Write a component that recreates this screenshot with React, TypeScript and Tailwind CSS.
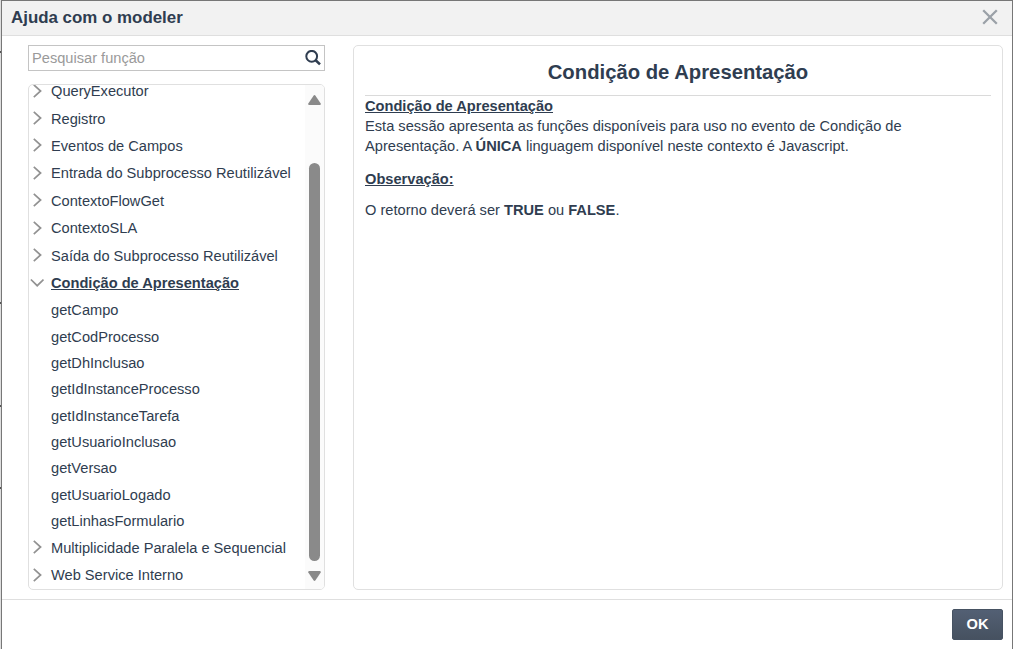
type Category = { name: string; children?: string[] };

const categories: Category[] = [
  { name: 'QueryExecutor' },
  { name: 'Registro' },
  { name: 'Eventos de Campos' },
  { name: 'Entrada do Subprocesso Reutilizável' },
  { name: 'ContextoFlowGet' },
  { name: 'ContextoSLA' },
  { name: 'Saída do Subprocesso Reutilizável' },
  {
    name: 'Condição de Apresentação',
    children: [
      'getCampo',
      'getCodProcesso',
      'getDhInclusao',
      'getIdInstanceProcesso',
      'getIdInstanceTarefa',
      'getUsuarioInclusao',
      'getVersao',
      'getUsuarioLogado',
      'getLinhasFormulario',
    ],
  },
  { name: 'Multiplicidade Paralela e Sequencial' },
  { name: 'Web Service Interno' },
];

function Chevron({ open }: { open: boolean }) {
  return (
    <svg width="14" height="14" viewBox="0 0 14 14" fill="none" stroke="#929292" strokeWidth="1.7" className="-mt-[3px] shrink-0">
      <path d={open ? 'M.9 4.5 7.2 10.7 13.5 4.5' : 'M3.8 .8 10.6 7 3.8 13.2'} />
    </svg>
  );
}

function CategoryRow({ category }: { category: Category }) {
  const open = !!category.children;
  return (
    <li>
      <div className="flex h-[27.4px] items-center gap-[7px] pl-px">
        <Chevron open={open} />
        <span className={open ? 'font-bold underline' : ''}>{category.name}</span>
      </div>
      {category.children && (
        <ul className="pt-[0.7px] pl-[22px]">
          {category.children.map((fn) => (
            <li key={fn} className="flex h-[26.3px] items-center">
              {fn}
            </li>
          ))}
        </ul>
      )}
    </li>
  );
}

function Scrollbar() {
  return (
    <div className="flex w-[19px] shrink-0 flex-col items-center bg-[#fbfbfb] pt-[10px] pr-px pb-[8px]">
      <svg width="13" height="10" viewBox="0 0 13 10" fill="#8a8a8a" className="shrink-0">
        <path d="M6.5 0Q7 0 7.5.7L12.7 8.5Q13 10 12 10H1Q0 10 .3 8.5L5.5.7Q6 0 6.5 0Z" />
      </svg>
      <div className="mt-[58px] h-[398px] w-[11px] shrink-0 rounded-full bg-[#8a8a8a]" />
      <svg width="13" height="10" viewBox="0 0 13 10" fill="#8a8a8a" className="mt-[10px] shrink-0">
        <path d="M6.5 10Q6 10 5.5 9.3L.3 1.5Q0 0 1 0H12Q13 0 12.7 1.5L7.5 9.3Q7 10 6.5 10Z" />
      </svg>
    </div>
  );
}

export default function App() {
  return (
    <div className="flex h-[649px] w-[1013px] bg-white font-['Liberation_Sans',Arial,sans-serif] text-[14.63px] text-[#2f3d50]">
      <div className="flex w-[2px] shrink-0 flex-col border-r border-[#777] bg-[#dedede]">
        <i className="mt-[51px] h-[2px] bg-[#555]" />
        <i className="mt-[249px] h-[2px] bg-[#555]" />
        <i className="mt-[101px] h-[2px] bg-[#555]" />
        <i className="mt-[80px] h-[2px] bg-[#555]" />
      </div>
      <div className="flex min-w-0 grow flex-col border-t border-r border-[#777]">
        <header className="flex h-[35px] shrink-0 items-center justify-between border-b border-[#dfdfdf] bg-[#f2f2f2] pr-[14px] pl-[9px]">
          <h1 className="text-[16.9px] font-bold">Ajuda com o modeler</h1>
          <button aria-label="Fechar" className="-mt-[2px]">
            <svg width="16" height="16" viewBox="0 0 16 16" stroke="#9ba1a8" strokeWidth="2.3" className="block">
              <path d="M1.2 1.2 14.8 14.8M14.8 1.2 1.2 14.8" />
            </svg>
          </button>
        </header>
        <main className="flex h-[563px] shrink-0 gap-[28px] pt-[9px] pr-[9px] pb-[9px] pl-[26px]">
          <aside className="flex w-[297px] shrink-0 flex-col gap-[13px]">
            <div className="flex h-[26px] shrink-0 items-center justify-between border border-[#c4c4c4] pr-[3px] pl-[3px]">
              <span className="pt-px text-[#9a9a9a]">Pesquisar função</span>
              <svg width="16" height="16" viewBox="0 0 16 16" fill="none" stroke="#2f3d50" strokeWidth="2">
                <circle cx="6.7" cy="6.3" r="5.4" />
                <path d="M10.4 10 15 14.4" strokeWidth="2.6" />
              </svg>
            </div>
            <div className="flex h-[507px] overflow-hidden rounded-[5px] border border-[#e0e0e0]">
              <ul className="-mt-[6.5px] min-w-0 grow whitespace-nowrap">
                {categories.map((c) => (
                  <CategoryRow key={c.name} category={c} />
                ))}
              </ul>
              <Scrollbar />
            </div>
          </aside>
          <article className="min-w-0 grow rounded-[5px] border border-[#e0e0e0] px-[11px]">
            <h2 className="flex h-[50px] items-center justify-center border-b border-[#dadada] pt-[3px] text-[20.27px] font-bold">
              Condição de Apresentação
            </h2>
            <div className="leading-[20.5px]">
              <p className="font-bold underline">Condição de Apresentação</p>
              <p className="-mt-[0.6px] w-[560px]">
                Esta sessão apresenta as funções disponíveis para uso no evento de Condição de
                <br />
                Apresentação. A <b>ÚNICA</b> linguagem disponível neste contexto é Javascript.
              </p>
              <p className="mt-[11.6px] font-bold underline">Observação:</p>
              <p className="mt-[11px]">
                O retorno deverá ser <b>TRUE</b> ou <b>FALSE</b>.
              </p>
            </div>
          </article>
        </main>
        <footer className="flex grow justify-end border-t border-[#dfdfdf] pt-[9px] pr-[9px]">
          <button className="h-[31px] w-[51px] rounded-[2px] border border-[#465262] bg-linear-to-b from-[#536074] to-[#465160] font-bold text-white">
            OK
          </button>
        </footer>
      </div>
    </div>
  );
}
